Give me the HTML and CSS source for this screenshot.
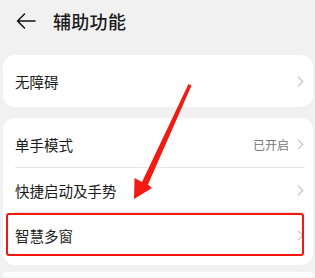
FILE: index.html
```html
<!DOCTYPE html>
<html lang="zh-CN">
  <head>
    <meta charset="UTF-8" />
    <meta name="viewport" content="width=device-width, initial-scale=1.0" />
    <title>辅助功能</title>
    <link rel="stylesheet" href="styles.css">
  </head>

  <body>
    <main>
      <header class="topbar">
        <svg class="back" width="20" height="16" viewBox="0 0 20 16">
          <path d="M19 8H1.5M8.5 1L1.5 8l7 7" fill="none" stroke="#111" stroke-width="1.5" stroke-linecap="round" stroke-linejoin="round"/>
        </svg>
        <h1>辅助功能</h1>
      </header>

      <section class="card single">
        <div class="row">
          <span class="label">无障碍</span>
          <span class="chev"></span>
        </div>
      </section>

      <section class="card group">
        <div class="row">
          <span class="label">单手模式</span>
          <span class="value">已开启</span>
          <span class="chev"></span>
        </div>
        <div class="row">
          <span class="label">快捷启动及手势</span>
          <span class="chev"></span>
        </div>
        <div class="row">
          <span class="label">智慧多窗</span>
          <span class="chev"></span>
        </div>
      </section>

      <section class="card tail"></section>

      <!-- annotation -->
      <div class="mark"></div>
      <svg class="arrow" width="315" height="278" viewBox="0 0 315 278">
        <polygon points="188.5,84 191.5,85.5 148,184.5 152,188 134,199 134.5,178 142,182" fill="#f21b14"/>
      </svg>
    </main>
  </body>
</html>
```

FILE: styles.css
```css
* {
  margin: 0;
  padding: 0;
  box-sizing: border-box;
}

body {
  background-color: #f1f1f1;
  font-family: "Noto Sans CJK SC", "Noto Sans", sans-serif;
  color: #1b1b1b;
  width: 315px;
  height: 278px;
  overflow: hidden;
}

main {
  position: relative;
  height: 278px;
  overflow: hidden;
}

.topbar {
  height: 44px;
  display: flex;
  align-items: center;
  padding-left: 16px;
}

.topbar .back {
  margin-right: 17px;
  margin-top: -2px;
}

.topbar h1 {
  font-size: 18px;
  font-weight: 500;
  letter-spacing: 0.3px;
  margin-top: -2px;
}

.card {
  background-color: #fff;
  border-radius: 12px;
  margin: 0 2px 0 3px;
}

.single {
  margin-top: 11px;
  height: 52px;
  display: flex;
  align-items: center;
}

.single .row {
  width: 100%;
}

.group {
  margin-top: 11px;
  padding: 4px 0 8px;
}

.tail {
  margin-top: 7px;
  height: 5px;
}

.row {
  height: 45px;
  display: flex;
  align-items: center;
  padding: 0 8px 0 12px;
}

.group .row + .row {
  border-top: 1px solid #e6e6e6;
  margin-left: 12px;
  margin-right: 8px;
  padding-left: 0;
  padding-right: 0;
}

.label {
  font-size: 14.5px;
  flex: 1;
}

.value {
  font-size: 12px;
  color: #777;
  margin-right: 6px;
}

.chev {
  width: 7px;
  height: 7px;
  border-right: 1.2px solid #bdbdbd;
  border-top: 1.2px solid #bdbdbd;
  transform: rotate(45deg);
  margin-right: 3px;
}

.mark {
  position: absolute;
  left: 6px;
  top: 213px;
  width: 298px;
  height: 43px;
  border: 2.5px solid #f2180f;
  border-radius: 3px;
}

.arrow {
  position: absolute;
  left: 0;
  top: 0;
}
```
